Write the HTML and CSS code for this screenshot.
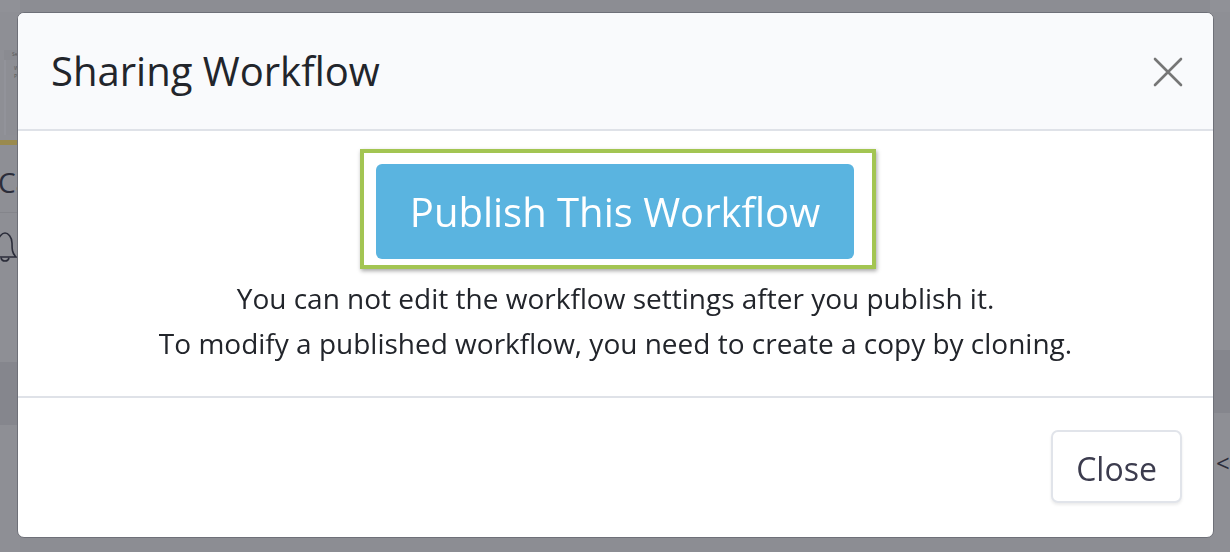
FILE: index.html
```html
<!DOCTYPE html>
<html>
<head>
<meta charset="utf-8">
<link rel="stylesheet" href="styles.css">
</head>
<body>
<div class="page">
  <div class="side left">
    <div class="top-strip"></div>
    <div class="card-thumb"><span class="tiny">Se</span><div class="thumb-box"><span class="tiny">W</span><span class="tiny">Pl</span></div></div>
    <div class="gold"></div>
    <div class="row-ca">Ca</div>
    <div class="row-bell">
      <svg width="30" height="40" viewBox="0 0 30 40"><path d="M4 30 C8 26 8 22 8 16 C8 10 12 6 15 6 C18 6 22 10 22 16 C22 22 22 26 26 30 Z M11 31 C12 35 18 35 19 31" fill="none" stroke="#2b2d3a" stroke-width="1.6"/></svg>
    </div>
    <div class="gap"></div>
    <div class="band"></div>
  </div>
  <div class="side right">
    <div class="top-strip"></div>
    <div class="filler"></div>
    <div class="band"></div>
    <div class="chev">&lt;</div>
  </div>
</div>
<div class="overlay">
  <div class="modal">
    <div class="modal-header">
      <h1 class="title">Sharing Workflow</h1>
      <button class="x-btn" aria-label="Close">
        <svg width="30" height="30" viewBox="0 0 30 30"><path d="M2 2 L28 28 M28 2 L2 28" stroke="#767676" stroke-width="2.6" stroke-linecap="round"/></svg>
      </button>
    </div>
    <div class="modal-body">
      <div class="highlight">
        <button class="publish">Publish This Workflow</button>
      </div>
      <p class="note">You can not edit the workflow settings after you publish it.<br>To modify a published workflow, you need to create a copy by cloning.</p>
    </div>
    <div class="modal-footer">
      <button class="close-btn">Close</button>
    </div>
  </div>
</div>
</body>
</html>
```
FILE: styles.css
```css
* { box-sizing: border-box; }
html, body { margin: 0; padding: 0; }
body {
  width: 1230px;
  height: 552px;
  overflow: hidden;
  background: #8c8d93;
  font-family: "Open Sans", "Noto Sans", sans-serif;
}
.page {
  display: flex;
  justify-content: space-between;
  height: 552px;
}
.side { width: 20px; display: flex; flex-direction: column; background: #8e8f95; }
.top-strip { height: 12px; background: #909197; flex: none; }
.card-thumb { margin: 38px 0 0 4px; height: 85px; display: flex; flex-direction: column; background: #8a8b91; flex: none; }
.tiny { font-size: 5px; color: #555; line-height: 8px; padding-left: 8px; }
.thumb-box { margin-top: 2px; padding-top: 4px; flex: 1; background: #8d8e94; border-left: 2px solid #92939a; display: flex; flex-direction: column; }
.gold { margin-top: 5px; height: 5px; background: #9a8a4e; flex: none; }
.row-ca { height: 68px; line-height: 74px; font-size: 28px; color: #2b2d3a; border-bottom: 1px solid #84858b; overflow: hidden; white-space: nowrap; flex: none; margin-left: -2px; }
.row-bell { height: 77px; padding-top: 14px; overflow: hidden; margin-left: -10px; flex: none; }
.gap { height: 72px; flex: none; }
.band { height: 63px; background: #85868d; flex: none; }
.filler { height: 338px; flex: none; }
.chev { margin-top: 38px; padding-left: 6px; font-size: 24px; line-height: 24px; color: #2b2d3a; }

.overlay {
  position: fixed;
  inset: 0;
  padding: 12px 16px 14px 17px;
}
.modal {
  width: 1197px;
  height: 526px;
  background: #fff;
  border: 1px solid #6e7078;
  border-radius: 7px;
  overflow: hidden;
  display: flex;
  flex-direction: column;
}
.modal-header {
  height: 118px;
  background: #f9fafc;
  border-bottom: 2px solid #dfe2e8;
  display: flex;
  align-items: center;
  justify-content: space-between;
  padding: 0 30px 0 33px;
}
.title {
  margin: 0;
  font-size: 40px;
  font-weight: 400;
  color: #22252b;
  line-height: 48px;
}
.x-btn {
  border: 0;
  background: none;
  padding: 0;
  width: 30px;
  height: 30px;
  margin-top: 2px;
}
.x-btn svg { display: block; }
.modal-body {
  height: 267px;
  border-bottom: 2px solid #dfe2e8;
  display: flex;
  flex-direction: column;
  align-items: center;
  padding-top: 18px;
}
.highlight {
  border: 4px solid #a3c552;
  padding: 11px 18px 6px 12px;
  box-shadow: 1px 2px 4px rgba(0,0,0,0.35);
  margin-left: 5px;
  background: #fff;
}
.publish {
  display: block;
  width: 478px;
  height: 95px;
  border: 0;
  border-radius: 6px;
  background: #5ab4e0;
  color: #fff;
  font-family: "Open Sans", "Noto Sans", sans-serif;
  font-size: 40px;
  padding: 0;
}
.note {
  margin: 7px 0 0 0;
  text-align: center;
  font-size: 28px;
  line-height: 45px;
  color: #22252b;
}
.modal-footer {
  flex: 1;
  display: flex;
  justify-content: flex-end;
  align-items: flex-start;
  padding: 32px 31px 0 0;
}
.close-btn {
  width: 131px;
  height: 73px;
  background: #fff;
  border: 2px solid #e1e4ea;
  border-radius: 7px;
  box-shadow: 0 2px 3px rgba(0,0,0,0.08);
  font-family: "Open Sans", "Noto Sans", sans-serif;
  font-size: 32px;
  color: #3c3c4e;
  padding: 3px 0 0 0;
}
```
